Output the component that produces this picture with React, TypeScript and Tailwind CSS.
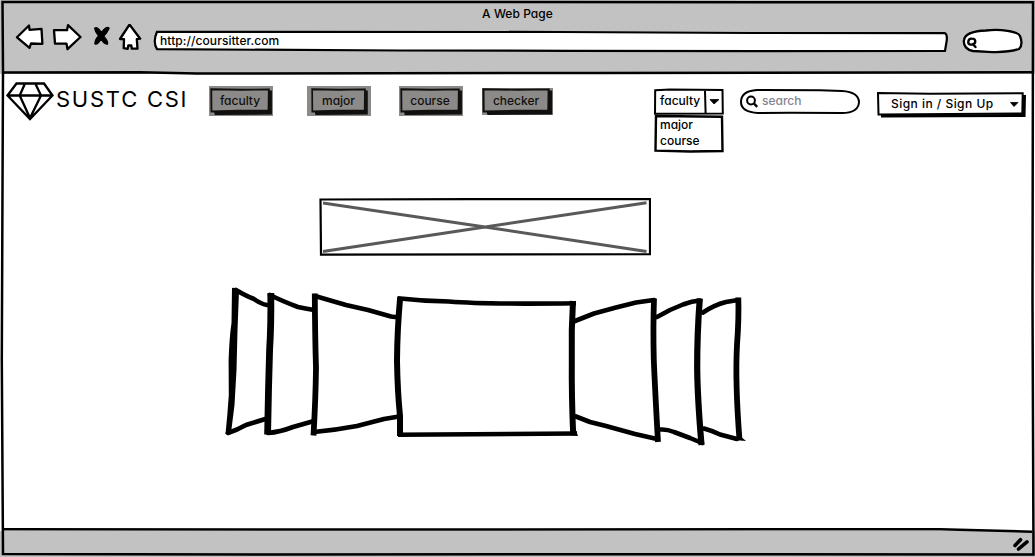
import type { ReactNode } from "react";

const ink = "absolute inset-0 h-full w-full overflow-visible pointer-events-none";

function Toolbar() {
  return (
    <header className="flex h-[74px] flex-col bg-[#c2c2c2]">
      <h1 className="h-[27px] pt-[5px] text-center text-[12px] font-medium leading-[17px] tracking-[0.05px]">A Web Page</h1>
      <div className="flex h-[30px] items-start">
        <svg className="-mt-[3px] ml-[14px] h-[30px] w-[130px] shrink-0" viewBox="14 24 130 30" fill="#fff" stroke="#000" strokeWidth="2.3" strokeLinejoin="round" strokeLinecap="round">
          <path d="M17 37.3 29 25.5 29.5 29.8 41.5 28.9 42.4 43.8 31 43.5 29.5 47.9Z" />
          <path d="M54 30.2 67 30.2 68 25.2 80.5 37 67.5 49.2 66.5 43.6 55 43.6Z" />
          <path d="M120 39 129.5 24.5 140.2 38.7 136.8 39.2 137.5 48.6 131.8 48.7 131.3 45.5 128.3 45.5 127.7 48.8 123.7 48.2 124 39.2Z" />
          <path d="M94.5 28.2 Q97.5 26 101.5 32.4 Q106.5 25.5 109.2 28.2 Q107 33 103.8 36.2 Q108.5 41.5 107.5 44.2 Q104 44.2 101.1 39 Q97.4 45.5 94.8 43.7 Q95 39.3 98.6 36 Q95.3 32.4 94.5 28.2Z" fill="#000" strokeWidth="1.2" />
        </svg>
        <div className="relative ml-[9px] mt-[3px] h-[22px] w-[796px] pl-[7px] text-[12px] font-medium leading-[21px]">
          <svg className={ink} viewBox="153 30 796 22" fill="#fff" stroke="#000" strokeWidth="2.2">
            <path d="M157 31.8 L560 32 L750 33 L945 33.2 Q947.2 34 946.8 40 L945 51 L760 51.2 L570 50.8 L400 50.5 L157 49.2 Q152.5 42 157 31.8Z" />
          </svg>
          <span className="relative tracking-[0.08px]">http://coursitter.com</span>
        </div>
        <svg className="ml-[12px] mt-[1px] h-[28px] w-[64px] shrink-0" viewBox="961 28 64 28" fill="#fff" stroke="#000" strokeWidth="2.3" strokeLinecap="round">
          <path d="M964 40 C965 33 974 31 986 30.5 C1000 29 1018 31 1020 36 C1022 41 1022 46 1019 49 C1010 52 1000 52.5 988 51.8 L973 51 C967 50 963 46 964 40Z" />
          <path d="M968.3 41.8 Q968.5 38.4 972 38.6 Q975.7 38.6 975.2 42.2 Q974 44.9 970.5 44.6 Q968 43.9 968.3 41.8M973 44.2 975.5 47" fill="none" strokeWidth="2.4" />
        </svg>
      </div>
    </header>
  );
}

function NavButton({ children, plate, box }: { children: ReactNode; plate: string; box: string }) {
  return (
    <div className={"relative shrink-0 bg-[#8c8a88] " + plate}>
      <button className={"relative block h-[25px] text-center text-[12px] font-medium leading-[25px] text-[#11100e] " + box}>
        <svg className={ink} preserveAspectRatio="none" viewBox="0 0 62 25" fill="#8c8a88">
          <path d="M4 23 L61 22 L61 2.5 L64 2.5 L64 26.5 L5 27Z" fill="#11100e" />
          <path d="M1.3 1.3 L32 1.8 L60.8 1.4 L60.5 22.5 L30 22.8 L1.5 23.5Z" stroke="#11100e" strokeWidth="1.9" />
        </svg>
        <span className="relative">{children}</span>
      </button>
    </div>
  );
}

function FacultySelect() {
  return (
    <div className="relative ml-[101px] h-[66px] w-[70px] text-[12px] font-medium leading-[16px]">
      <svg className={ink} viewBox="654 88 70 66" fill="#fff" stroke="#000" strokeWidth="2">
        <path d="M655.2 90.2 L670 89.5 L722.5 90 L722.8 113.5 L655 113.7Z" />
        <path d="M705 91 705.6 113" />
        <path d="M656 116 L722 116.7 L722.5 151 L690 151.5 L655.5 150.7Z" strokeWidth="2.4" />
        <path d="M710 99.5 714 104 719 99.5Z" fill="#000" stroke="#000" strokeWidth=".8" />
      </svg>
      <div className="relative flex flex-col pl-[6px] pt-[4px]">
        <span className="h-[24.5px] leading-[17px]">faculty</span>
        <span>major</span>
        <span>course</span>
      </div>
    </div>
  );
}

function Navbar() {
  return (
    <nav className="flex h-[91px] items-start pl-[4px] pt-[12px]">
      <div className="flex h-[40px] w-[205px] shrink-0">
        <svg className="-mt-[6px] h-[42px] w-[52px] shrink-0" viewBox="4 80 52 42" fill="none" stroke="#000" strokeWidth="2.3" strokeLinejoin="miter">
          <path d="M16.5 83.5 H44 L52.5 95.5 L30 119 L7.5 95.5Z M7.5 95.5H52.5 M25 83.5 L19.7 95.5 L30 118 L41 95.5 L35.3 83.5" />
        </svg>
        <span className="whitespace-nowrap text-[22px] leading-[26px] tracking-[1.75px]">SUSTC CSI</span>
      </div>
      <NavButton plate="h-[30px] w-[64px] pl-[1px] pt-[2px]" box="w-[60px]">faculty</NavButton>
      <div className="ml-[34px]"><NavButton plate="h-[30px] w-[64px] pl-[4px] pt-[2px]" box="w-[55px]">major</NavButton></div>
      <div className="ml-[28px]"><NavButton plate="h-[30px] w-[64px] pl-[1px] pt-[2px]" box="w-[60px]">course</NavButton></div>
      <div className="ml-[19px] pt-[2px]"><NavButton plate="h-[27px] w-[71px]" box="w-[68px]">checker</NavButton></div>
      <div className="pt-[2px]"><FacultySelect /></div>
      <label className="relative ml-[15px] mt-[2px] h-[27px] w-[122px] pl-[23px] text-[12px] font-medium leading-[25px] text-[#858590]">
        <svg className={ink} viewBox="739 88 122 27" fill="#fff" stroke="#000" strokeWidth="2">
          <path d="M757 90 L820 90.2 L842 91 Q859 92 859 102.5 Q858 113 842 113 L790 112.7 L758 113 Q741 112 741 102 Q741 91 757 90Z" />
          <circle cx="751" cy="100.5" r="3.9" />
          <path d="m754 103.5 3.2 3.4" strokeWidth="2.4" />
        </svg>
        <span className="relative">search</span>
      </label>
      <button className="relative ml-[15px] mt-[5px] flex h-[27px] w-[150px] items-start pl-[15px] pt-px text-left text-[12px] font-medium leading-[23px]">
        <svg className={ink} viewBox="876 91 150 27" fill="#fff" stroke="#000" strokeWidth="2">
          <path d="M881 115 L1022 114 L1023 95 L1026 95 L1025.5 117 L881 117.5Z" fill="#000" stroke="none" />
          <path d="M878 93 L930 93.8 L975 93.5 L1022.7 93.2 L1022.3 113.5 L950 114 L878.5 114.5Z" />
          <path d="M1010.5 102.5 1014 106.5 1018 102.5Z" fill="#000" strokeWidth=".8" />
        </svg>
        <span className="relative tracking-[0.47px]">Sign in / Sign Up</span>
      </button>
    </nav>
  );
}

function ImagePlaceholder() {
  return (
    <svg className="ml-[319px] mt-[33px] h-[58px] w-[332px]" viewBox="319 198 332 58" fill="none">
      <path d="M320.5 199.5 L470 199.2 L650 199.2 L650 254.2 L321 254.7Z" stroke="#000" strokeWidth="2.2" />
      <path d="M324.5 203.3 485 227 645 251.2M324.5 251.2 485 227 645 203" stroke="#595959" strokeWidth="3" strokeLinecap="square" />
    </svg>
  );
}

function Carousel() {
  return (
    <svg className="ml-[220px] mt-[27px] h-[170px] w-[530px]" viewBox="220 283 530 170" fill="none" stroke="#000" strokeLinejoin="round">
      <g strokeWidth="4.6" strokeLinecap="round">
        <path d="M236 290 Q246 296 254 299 Q261 304 267 305M228 433 Q237 430 246 425 L267 418.5" />
        <path d="M270 295 Q282 301 298 307 Q305 308.5 314 310M268 433 Q280 432 293 427 L314 421" />
        <path d="M315 296 L346 305 L368 310 L391 316.5 L399 317.5M314 432 Q336 430 357 426 L384 419 L399 416.5" />
        <path d="M575 321 L594 313.5 L616 307.5 L636 302.5 L654 300M576 416.5 L590 422 L606 426 L635 434 L657 439" />
        <path d="M657 317 L670 310 L683 304.5 Q692 301 700 300.5M660 429.5 Q667 429 674 432 L690 438 L702 443" />
        <path d="M703 312.5 Q714 305 726 302 L738 300M704 428.5 Q713 431 720 434.5 L737 439" />
      </g>
      <path d="M232 288 Q235 287 239 291 L237.5 330 L236.5 370 L234.5 405 L231 433 L225.5 434 Q227.5 415 228.8 395 L228.6 360 Q229.4 337 231.5 323Z" fill="#000" stroke="none" />
      <path d="M270.8 293 Q271.2 325 269.6 350 L268.5 390 L267.6 434.5" strokeWidth="6.8" />
      <path d="M314.8 293.5 Q315 335 316 368 Q315.6 399 313.5 435.5" strokeWidth="5.8" />
      <path d="M400.2 297 Q397.2 330 397 361 Q397.5 391 400 416 L400 436" strokeWidth="6" />
      <path d="M397.5 298.2 Q422 301 449 301.5 Q485 304.5 576 303.2M398 434.7 Q480 434.2 577 433.5" strokeWidth="4.6" />
      <path d="M573 301 Q571.2 330 571.8 360 Q571.5 396 573.2 435" strokeWidth="6" />
      <path d="M654 298.5 Q653 327 653.8 360 Q655 389 658 442" strokeWidth="5.8" />
      <path d="M699.8 298.5 Q697 335 697.2 369 Q697.5 398 701.5 445" strokeWidth="6.2" />
      <path d="M738.3 297.5 Q739 318 737 345 Q735 382 739.5 440" strokeWidth="5.8" />
      <path d="M574 425 578 436 570 435ZM739 435 746 441 734 440Z" fill="#000" stroke="none" />
    </svg>
  );
}

export default function App() {
  return (
    <div className="relative flex h-[557px] w-[1035px] flex-col overflow-hidden bg-white text-black [font-family:Inter,'Liberation_Sans',sans-serif] [font-feature-settings:'cv11']">
      <Toolbar />
      <Navbar />
      <main className="flex flex-1 flex-col"><ImagePlaceholder /><Carousel /></main>
      <footer className="relative flex h-[26px] justify-end bg-[#c2c2c2]">
        <svg className="mr-[5px] mt-[5px] h-[18px] w-[19px]" viewBox="1011 536 19 18" stroke="#000" strokeWidth="3.6" strokeLinecap="round">
          <path d="M1015 545.5 1020.5 539.7M1018.5 549 1027 541.8" />
        </svg>
      </footer>
      <svg className={ink} viewBox="0 0 1035 557" fill="none" stroke="#000" strokeWidth="2.5">
        <path d="M2.5 2 L1033 2.2 L1032.5 300 L1033.5 554.5 L650 554.3 L270 554.5 L3 554 L1.8 360 L3 70Z" />
        <path d="M3 72.5 L140 72.2 L197 73.5 L600 73 L1033 72.2" />
        <path d="M3 529.3 L500 529.5 L940 529.2 L1032 531.7" />
      </svg>
    </div>
  );
}
